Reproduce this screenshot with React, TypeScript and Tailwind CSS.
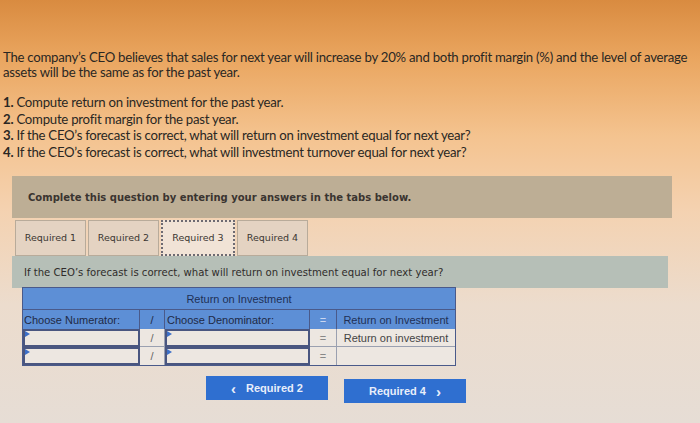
const tabs = ['Required 1', 'Required 2', 'Required 3', 'Required 4'];

const InputCell = () => (
    <div className="relative h-full border-2 border-[#4a5680] bg-[#ede7e1]">
        <span className="absolute left-0 top-0 h-0 w-0 border-y-[3px] border-l-[5px] border-y-transparent border-l-[#3c6fc8]" />
    </div>
);

const App = () => {
    return (
        <div className="h-[423px] w-[700px] overflow-hidden bg-[linear-gradient(180deg,#d98b40_0%,#eaa660_14%,#f4c38f_32%,#f4d2b1_50%,#ecdccd_72%,#e6ddd5_100%)] pt-[50px] text-[#2a2723]">
            <p className="px-[3px] font-['Lato',sans-serif] text-[13.2px] leading-[15px] tracking-[-0.25px]">
                The company’s CEO believes that sales for next year will increase by 20% and both profit margin (%) and the level of average
                assets will be the same as for the past year.
            </p>
            <ol className="mt-[14px] px-[3px] font-['Lato',sans-serif] text-[13.2px] leading-[16.6px] tracking-[-0.25px]">
                <li>
                    <b>1.</b> Compute return on investment for the past year.
                </li>
                <li>
                    <b>2.</b> Compute profit margin for the past year.
                </li>
                <li>
                    <b>3.</b> If the CEO’s forecast is correct, what will return on investment equal for next year?
                </li>
                <li>
                    <b>4.</b> If the CEO’s forecast is correct, what will investment turnover equal for next year?
                </li>
            </ol>

            <div className="ml-[12px] mt-[16px] flex h-[42px] w-[660px] items-center bg-[#bdae95] pl-[16px] font-['DejaVu_Sans',sans-serif] text-[10px] font-bold text-[#3a3430]">
                Complete this question by entering your answers in the tabs below.
            </div>

            <div className="ml-[15px] mt-[2px] flex h-[36px] font-['DejaVu_Sans',sans-serif] text-[9.5px] text-[#3b3632]">
                {tabs.map((t, i) => (
                    <div
                        key={t}
                        className={
                            i === 2
                                ? 'mr-[2px] flex w-[74px] items-center justify-center border-2 border-dotted border-[#6d6a72] bg-[#f1e3d6]'
                                : 'mr-[2px] flex w-[71px] items-center justify-center border border-[#b8ab9a] bg-[#e4d3c2]'
                        }
                    >
                        {t}
                    </div>
                ))}
            </div>

            <div className="ml-[12px] flex h-[32px] w-[656px] items-center bg-[#b6bfb7] pl-[12px] font-['DejaVu_Sans',sans-serif] text-[10.1px] text-[#2f2c2a]">
                If the CEO’s forecast is correct, what will return on investment equal for next year?
            </div>

            <div className="ml-[22px] mt-[-1px] w-[434px] border border-[#4a5a8a] font-['Liberation_Sans',sans-serif] text-[11px]">
                <div className="flex h-[21px] items-center justify-center bg-[#5d8fd6] text-[#1f2f55]">Return on Investment</div>
                <div className="grid grid-cols-[117px_25px_145px_27px_1fr] grid-rows-[20px_18px_18px]">
                    <div className="flex items-center border-t border-r border-[#4a5a8a] bg-[#5d8fd6] pl-[1px] text-[#1f2a45]">Choose Numerator:</div>
                    <div className="flex items-center justify-center border-t border-r border-[#4a5a8a] bg-[#5d8fd6] text-[#1f2a45]">/</div>
                    <div className="flex items-center border-t border-r border-[#4a5a8a] bg-[#5d8fd6] pl-[2px] text-[#1f2a45]">Choose Denominator:</div>
                    <div className="flex items-center justify-center border-t border-r border-[#4a5a8a] bg-[#5d8fd6] text-[#c9d6f0]">=</div>
                    <div className="flex items-center justify-center border-t border-[#4a5a8a] bg-[#5d8fd6] text-[#1f2f55]">Return on Investment</div>

                    <InputCell />
                    <div className="flex items-center justify-center border-r border-b border-[#9aa0b0] bg-[#ede7e1] text-[#666]">/</div>
                    <InputCell />
                    <div className="flex items-center justify-center border-r border-b border-[#9aa0b0] bg-[#ede7e1] text-[#888]">=</div>
                    <div className="flex items-center justify-center border-b border-[#9aa0b0] bg-[#ede7e1] text-[#444]">Return on investment</div>

                    <InputCell />
                    <div className="flex items-center justify-center border-r border-[#9aa0b0] bg-[#ede7e1] text-[#666]">/</div>
                    <InputCell />
                    <div className="flex items-center justify-center border-r border-[#9aa0b0] bg-[#ede7e1] text-[#888]">=</div>
                    <div className="bg-[#ede7e1]" />
                </div>
            </div>

            <div className="ml-[206px] mt-[10px] flex items-start gap-[16px] font-['Liberation_Sans',sans-serif] text-[11px] font-bold text-[#e8eefa]">
                <button className="flex h-[24px] w-[122px] items-center justify-center gap-[10px] bg-[#2f6fd0]">
                    <span className="text-[15px] leading-none">‹</span>
                    Required 2
                </button>
                <button className="mt-[3px] flex h-[24px] w-[122px] items-center justify-center gap-[10px] bg-[#2f6fd0]">
                    Required 4
                    <span className="text-[15px] leading-none">›</span>
                </button>
            </div>
        </div>
    );
};

export default App;
